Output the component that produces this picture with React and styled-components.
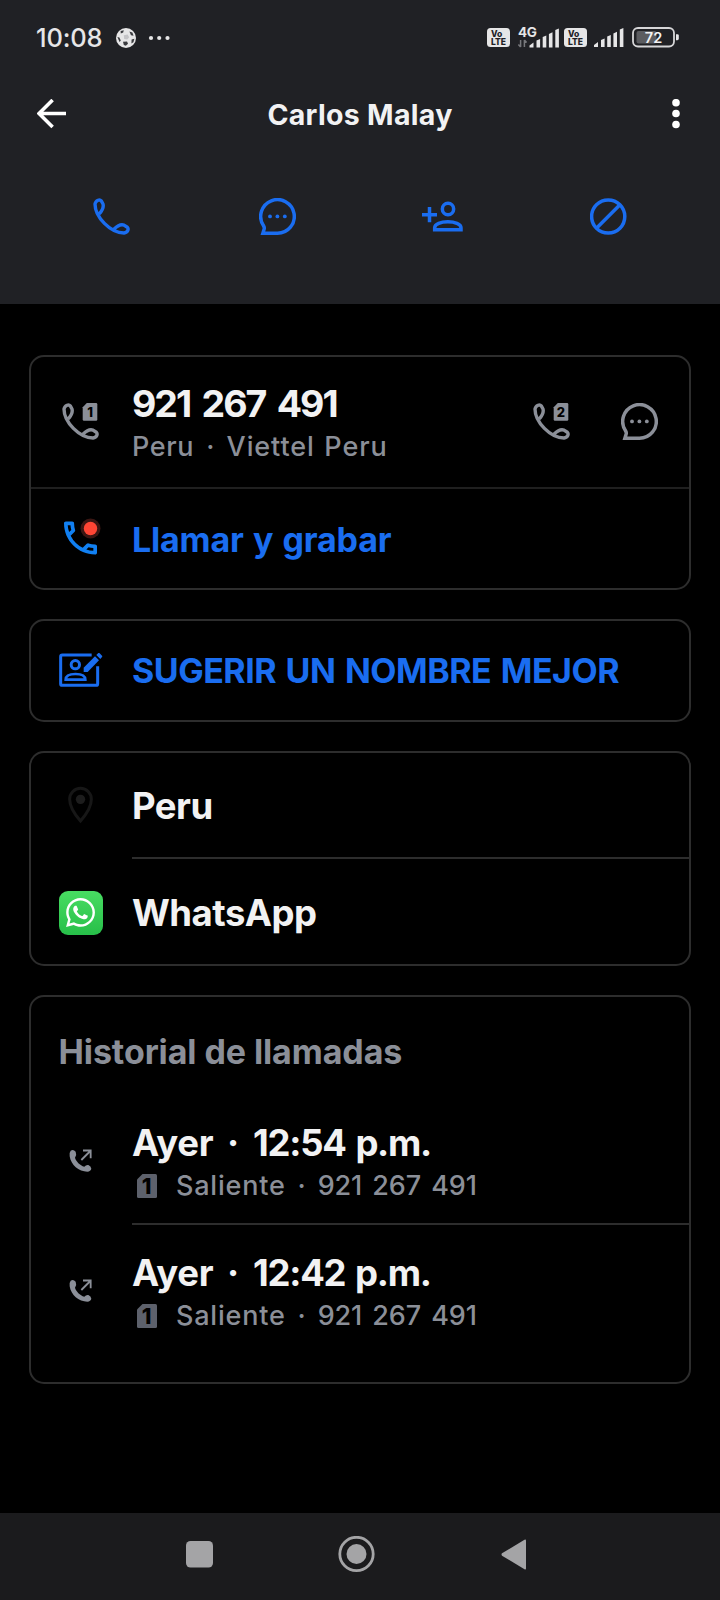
import styled, { createGlobalStyle } from "styled-components";
import { FaWhatsapp } from "react-icons/fa";
import { MdOutlineCall } from "react-icons/md";

const blue = "#1a6df0";
const grey = "#8b8f98";
const white = "#f2f2f3";

const GlobalStyle = createGlobalStyle`
  * {
    box-sizing: border-box;
  }
  body {
    margin: 0;
    background: #000;
    font-family: Inter, "Liberation Sans", sans-serif;
    color: ${white};
  }
  svg {
    display: block;
    flex-shrink: 0;
  }
`;

const Main = styled.div`
  width: 720px;
  height: 1600px;
  display: flex;
  flex-direction: column;
  background: #000;
  overflow: hidden;
`;

const Header = styled.header`
  height: 304px;
  background: #202125;
`;

const StatusBar = styled.div`
  height: 75px;
  display: flex;
  align-items: center;
  padding: 0 41px 0 36px;
`;

const Clock = styled.span`
  font-size: 25.5px;
  font-weight: 500;
  line-height: 30px;
  letter-spacing: -0.2px;
  width: 80px;
  padding-top: 1px;
  color: #e6e6e8;
`;

const StatusIcons = styled.div`
  display: flex;
  align-items: center;
  margin-left: auto;
`;

const VolteBadge = styled.div`
  width: 23px;
  height: 19px;
  margin: 0 7px 0 ${(p) => p.$before || 0}px;
  border-radius: 3.5px;
  background: #e6e6e7;
  color: #202125;
  font-size: 8.5px;
  font-weight: 800;
  line-height: 8px;
  padding: 2px 0 0 4px;
`;

const BatterySlot = styled.div`
  margin-left: 8px;
`;

const TitleBar = styled.div`
  height: 78px;
  display: grid;
  grid-template-columns: 1fr auto 1fr;
  align-items: center;
  padding: 0 40px 0 37px;

  & svg:last-child {
    justify-self: end;
  }
`;

const Title = styled.h1`
  margin: 2px 0 0 3px;
  font-size: 28.5px;
  font-weight: 700;
  line-height: 36px;
  letter-spacing: 0.3px;
`;

const Actions = styled.div`
  display: grid;
  grid-template-columns: repeat(4, 165.5px);
  justify-content: center;
  justify-items: center;
  align-items: center;
  height: 126px;
`;

const Content = styled.main`
  flex: 1;
  display: flex;
  flex-direction: column;
  gap: 29px;
  padding: 51px 29px 0;
`;

const Card = styled.section`
  border: 2px solid #2d2d2d;
  border-radius: 15px;
  padding-bottom: ${(p) => p.$bottom || 0}px;
`;

const Row = styled.div`
  height: ${(p) => p.$height}px;
  display: flex;
  align-items: center;
`;

const Divider = styled.div`
  height: 2px;
  margin-left: ${(p) => (p.$inset ? 101 : 0)}px;
  background: ${(p) => (p.$inset ? "#2d2d2d" : "#1f1f1f")};
`;

const IconCell = styled.div`
  width: 101px;
  padding: ${(p) => p.$drop || 0}px 2px ${(p) => p.$lift || 0}px 0;
  display: flex;
  justify-content: center;
`;

const Stack = styled.div`
  flex: 1;
  padding-top: ${(p) => p.$drop}px;
`;

const Primary = styled.div`
  padding-top: ${(p) => p.$drop || 0}px;
  font-size: ${(p) => p.$size || 36.5}px;
  font-weight: 700;
  line-height: ${(p) => p.$line || 42}px;
  letter-spacing: ${(p) => p.$spacing || 0}px;
  word-spacing: ${(p) => p.$word || 0}px;
  white-space: nowrap;
`;

const Link = styled(Primary)`
  color: ${blue};
`;

const Secondary = styled.div`
  display: flex;
  align-items: center;
  padding-top: ${(p) => p.$drop || 0}px;
  font-size: 27px;
  font-weight: 500;
  line-height: 42px;
  color: ${grey};
`;

const Words = styled.span`
  letter-spacing: ${(p) => p.$spacing || 0}px;
  word-spacing: ${(p) => p.$word || 0}px;
`;

const Dot = styled.span`
  display: inline-block;
  width: ${(p) => p.$width}px;
  text-align: center;
  letter-spacing: 0;
`;

const SimSlot = styled.div`
  padding: 0 19.5px 0 4.5px;
`;

const RowActions = styled.div`
  display: flex;
  gap: 51px;
  padding: 0 31px 1px 0;
`;

const SectionTitle = styled.h2`
  margin: 0;
  height: 98px;
  padding: 34px 0 0 27.5px;
  font-size: 34px;
  font-weight: 700;
  line-height: 42px;
  letter-spacing: -0.1px;
  color: ${grey};
`;

const WhatsAppTile = styled.div`
  width: 44px;
  height: 44px;
  border-radius: 9px;
  display: flex;
  align-items: center;
  justify-content: center;
  color: #fff;
  background: linear-gradient(#48dc62, #27bf49);
`;

const NavBar = styled.nav`
  height: 87px;
  display: grid;
  grid-template-columns: 157px 157px 157px;
  justify-content: center;
  justify-items: center;
  align-items: center;
  padding: 0 7px 5px 0;
  background: #1b1b1d;
`;

const Ball = () => (
  <svg width="20" height="20" viewBox="0 0 20 20">
    <circle cx="10" cy="10" r="10" fill="#e6e6e7" />
    <g fill="#3a3b3f">
      <path d="M4.6 3L7.8 2.2 7.2 4.6 4.8 5.6z" />
      <path d="M13.4 3.4L16.4 4.6 17.6 7.8 15 7.2z" />
      <path d="M1.4 9L3.4 9.4 4.8 12.4 3.6 14z" />
      <path d="M7 13.8L11 13.4 12 15.8 9.8 17.8 7.8 17z" />
      <path d="M15.6 11.6L18.4 10.8 17.4 14.2 15.4 15.4z" />
      <path d="M7.8 7.2L11.6 6.4 13.2 9.2 11.2 11.6 8.2 11z" fill="#c4c4c7" />
    </g>
  </svg>
);

const Dots = () => (
  <svg width="34" height="6" viewBox="-12 0 34 6" fill="#e6e6e7">
    <circle cx="3" cy="3" r="2.1" />
    <circle cx="11.2" cy="3" r="2.1" />
    <circle cx="19.5" cy="3" r="2.1" />
  </svg>
);

const bars = [
  "M0 19v-2l4-3v5z",
  "M7 19v-7l3.6-1.6V19z",
  "M13.2 19v-10.4l3.6-1.6V19z",
  "M19.4 19V5.4L23 3.8V19z",
  "M25.8 19V1.6L29.4 0V19z",
];

const Signal4G = () => (
  <svg width="43" height="32" viewBox="-1 -4 43 32">
    <g transform="translate(11.5 2.5)" fill="#e6e6e7">
      {bars.map((d) => (
        <path key={d} d={d} />
      ))}
    </g>
    <text
      x="0"
      y="10.5"
      fontSize="13.5"
      fontWeight="700"
      fill="#e6e6e7"
      textLength="19"
      stroke="#202125"
      strokeWidth="1.5"
      paintOrder="stroke"
    >
      4G
    </text>
    <path
      d="M2.6 14v7M.4 18.5l2.2 2.5M6.4 21v-7M8.6 16.5l-2.2-2.5"
      fill="none"
      stroke="#77787c"
      strokeWidth="1.5"
    />
  </svg>
);

const Signal = () => (
  <svg width="30" height="19" viewBox="0 0 30 19" fill="#e6e6e7">
    {bars.map((d) => (
      <path key={d} d={d} />
    ))}
  </svg>
);

const Battery = () => (
  <svg width="47" height="21" viewBox="0 0 47 21">
    <rect x="1" y="1" width="41" height="18.5" rx="5" fill="none" stroke="#d6d6d8" strokeWidth="1.8" />
    <rect x="4.5" y="4" width="20" height="12.5" rx="2" fill="#5b5c60" />
    <path d="M44 7.2h1.4q1.4 0 1.4 1.4v3.2q0 1.4-1.4 1.4H44z" fill="#e6e6e7" />
    <text x="21.5" y="15.6" fontSize="14.5" fontWeight="600" fill="#f2f2f3" textAnchor="middle">
      72
    </text>
  </svg>
);

const BackArrow = () => (
  <svg width="30" height="30" viewBox="0 0 30 30" fill="none" stroke="#fff" strokeWidth="3.6">
    <path d="M29 14.5H2.5M15.6 1L2 14.5l13.6 13.5" />
  </svg>
);

const MoreDots = () => (
  <svg width="8" height="30" viewBox="0 0 8 30" fill="#fff">
    <circle cx="4" cy="3.7" r="3.8" />
    <circle cx="4" cy="14.5" r="3.8" />
    <circle cx="4" cy="25.5" r="3.8" />
  </svg>
);

const handset =
  "M6.3 15.9C9.3 12.6 10.7 8.6 10 6L8.3 2.9Q7 1.4 5.1 2.2Q2.5 3.3 2 6C2 19 17.5 35 31 35Q33.8 34.6 34.9 32.2Q35.5 30.4 34.3 29.2L31 27.1C28 26.1 24.6 27.6 21.2 31";

const PhoneIcon = ({ color, sim }) => (
  <svg width="37" height="37" viewBox="0 0 37 37">
    <path d={handset} fill="none" stroke={color} strokeWidth="3.4" strokeLinejoin="round" />
    {sim && (
      <>
        <path d="M24.8 0H34q1.3 0 1.3 1.3v15.2q0 1.3-1.3 1.3H22q-1.3 0-1.3-1.3V4.2z" fill={color} />
        <text x="28" y="13.7" fontSize="13" fontWeight="800" fill="#000" textAnchor="middle">
          {sim}
        </text>
      </>
    )}
  </svg>
);

const ChatIcon = ({ color }) => (
  <svg width="37" height="37" viewBox="0 0 37 37" fill={color}>
    <path
      d="M3.9 35.2H18.5A16.8 16.8 0 1 0 4.3 27.4Q5.9 29.6 5 31.6z"
      fill="none"
      stroke={color}
      strokeWidth="3.5"
    />
    <circle cx="11" cy="18.4" r="1.9" />
    <circle cx="18.4" cy="18.4" r="1.9" />
    <circle cx="25.8" cy="18.4" r="1.9" />
  </svg>
);

const AddPersonIcon = () => (
  <svg width="41" height="31" viewBox="67 92 123 93" fill="none" stroke={blue} strokeWidth="10.5">
    <path d="M67 133H112M89.5 110V156" />
    <circle cx="145" cy="116" r="17" />
    <path d="M105 178V172C105 161 124 154 144.5 154S184 161 184 172V178Z" />
  </svg>
);

const BlockIcon = () => (
  <svg width="37" height="37" viewBox="0 0 37 37" fill="none" stroke={blue} strokeWidth="3.5">
    <circle cx="18.2" cy="18.5" r="16.6" />
    <path d="M6.7 30L29.7 7" />
  </svg>
);

const RecordIcon = () => (
  <svg width="46" height="46" viewBox="1 1 46 46">
    <MdOutlineCall x="1.5" y="1" size={44} color="#1180f2" />
    <circle cx="33.5" cy="13.5" r="10" fill="#3b1613" />
    <circle cx="33.5" cy="13.5" r="6.7" fill="#ff4534" />
  </svg>
);

const SuggestIcon = () => (
  <svg width="44" height="34" viewBox="116 130 132 102" fill="none" stroke={blue} strokeWidth="9">
    <path d="M214 136H126Q121 136 121 141V222Q121 227 126 227H227Q232 227 232 222V170" />
    <circle cx="165" cy="165" r="12.5" />
    <path d="M136 210C136 198 150 193 165.5 193S195 198 195 210Z" strokeWidth="8" />
    <path d="M190 187V174L224 140L236 152L202 187Z" fill={blue} stroke="none" />
    <path d="M228 136L234 130Q236 129 238 131L245 138Q247 140 245 142L240 148Z" fill={blue} stroke="none" />
  </svg>
);

const PinIcon = () => (
  <svg width="27" height="38" viewBox="141 124 81 114">
    <path
      d="M181.5 229C160 205 149 185 149 164A32.5 33 0 0 1 214 164C214 185 203 205 181.5 229Z"
      fill="none"
      stroke="#171717"
      strokeWidth="9"
    />
    <circle cx="181.5" cy="164" r="14" fill="#1d1d1d" />
  </svg>
);

const OutgoingIcon = () => (
  <svg width="23" height="23" viewBox="148 492 69 69">
    <path
      d="M153 497Q148 503 150 514C154 540 177 560 203 560Q213 559 215 551Q214 544 206 540Q199 539 194 545C181 541 169 529 166 518Q172 510 168 500Q161 492 153 497Z"
      fill={grey}
    />
    <path d="M185 525L212 498M190 496.5H213V520" fill="none" stroke={grey} strokeWidth="5.5" />
  </svg>
);

const SimIcon = () => (
  <svg width="20" height="24" viewBox="0 0 20 24">
    <path d="M5.5 0H18.5Q20 0 20 1.5V22.5Q20 24 18.5 24H1.5Q0 24 0 22.5V5.5Z" fill="#5d616c" />
    <text x="9.5" y="20" fontSize="22" fontWeight="800" fill="#000" textAnchor="middle">
      1
    </text>
  </svg>
);

const calls = [
  { id: 1, day: "Ayer", time: "12:54 p.m.", type: "Saliente", number: "921 267 491" },
  { id: 2, day: "Ayer", time: "12:42 p.m.", type: "Saliente", number: "921 267 491" },
];

const CallEntry = ({ call }) => (
  <Row $height={128}>
    <IconCell $drop={2}>
      <OutgoingIcon />
    </IconCell>
    <Stack $drop={11}>
      <Primary>
        <Words $spacing={-0.4}>{call.day}</Words>
        <Dot $width={40}>·</Dot>
        <Words $spacing={-1.3} $word={2.5}>
          {call.time}
        </Words>
      </Primary>
      <Secondary $drop={1}>
        <SimSlot>
          <SimIcon />
        </SimSlot>
        <Words $spacing={0.8}>{call.type}</Words>
        <Dot $width={32}>·</Dot>
        <Words $spacing={-0.1} $word={3}>
          {call.number}
        </Words>
      </Secondary>
    </Stack>
  </Row>
);

export default function App() {
  return (
    <Main>
      <GlobalStyle />
      <Header>
        <StatusBar>
          <Clock>10:08</Clock>
          <Ball />
          <Dots />
          <StatusIcons>
            <VolteBadge>
              Vo
              <br />
              LTE
            </VolteBadge>
            <Signal4G />
            <VolteBadge $before={4}>
              Vo
              <br />
              LTE
            </VolteBadge>
            <Signal />
            <BatterySlot>
              <Battery />
            </BatterySlot>
          </StatusIcons>
        </StatusBar>
        <TitleBar>
          <BackArrow />
          <Title>Carlos Malay</Title>
          <MoreDots />
        </TitleBar>
        <Actions>
          <PhoneIcon color={blue} />
          <ChatIcon color={blue} />
          <AddPersonIcon />
          <BlockIcon />
        </Actions>
      </Header>

      <Content>
        <Card>
          <Row $height={130}>
            <IconCell $lift={1}>
              <PhoneIcon color={grey} sim="1" />
            </IconCell>
            <Stack $drop={6}>
              <Primary $size={37.5} $line={44} $spacing={-2} $word={4.5}>
                921 267 491
              </Primary>
              <Secondary>
                <Words $spacing={0.6}>Peru</Words>
                <Dot $width={32.5}>·</Dot>
                <Words $spacing={0.9} $word={1.5}>
                  Viettel Peru
                </Words>
              </Secondary>
            </Stack>
            <RowActions>
              <PhoneIcon color={grey} sim="2" />
              <ChatIcon color={grey} />
            </RowActions>
          </Row>
          <Divider />
          <Row $height={99}>
            <IconCell>
              <RecordIcon />
            </IconCell>
            <Link $drop={2} $size={34} $spacing={-0.2} $word={1.5}>
              Llamar y grabar
            </Link>
          </Row>
        </Card>

        <Card>
          <Row $height={99}>
            <IconCell $lift={1}>
              <SuggestIcon />
            </IconCell>
            <Link $drop={1} $size={34} $spacing={-0.5} $word={2}>
              SUGERIR UN NOMBRE MEJOR
            </Link>
          </Row>
        </Card>

        <Card>
          <Row $height={104}>
            <IconCell>
              <PinIcon />
            </IconCell>
            <Primary $drop={2} $spacing={-0.5}>
              Peru
            </Primary>
          </Row>
          <Divider $inset />
          <Row $height={105}>
            <IconCell $drop={2}>
              <WhatsAppTile>
                <FaWhatsapp size={33} />
              </WhatsAppTile>
            </IconCell>
            <Primary $drop={2} $spacing={-0.5}>
              WhatsApp
            </Primary>
          </Row>
        </Card>

        <Card $bottom={29}>
          <SectionTitle>Historial de llamadas</SectionTitle>
          <CallEntry call={calls[0]} />
          <Divider $inset />
          <CallEntry call={calls[1]} />
        </Card>
      </Content>

      <NavBar>
        <svg width="27" height="27" viewBox="0 0 27 27">
          <rect width="27" height="26.5" rx="4.5" fill="#a4a4a6" />
        </svg>
        <svg width="37" height="37" viewBox="0 0 37 37">
          <circle cx="18.5" cy="18" r="16.7" fill="none" stroke="#a4a4a6" strokeWidth="2.8" />
          <circle cx="18.5" cy="18" r="10" fill="#a4a4a6" />
        </svg>
        <svg width="25" height="31" viewBox="0 0 25 31">
          <path d="M1 14.3Q0 15.5 1 16.7L23.5 30.3Q25 31 25 29.5V1.5Q25 0 23.5 .7Z" fill="#a4a4a6" />
        </svg>
      </NavBar>
    </Main>
  );
}
